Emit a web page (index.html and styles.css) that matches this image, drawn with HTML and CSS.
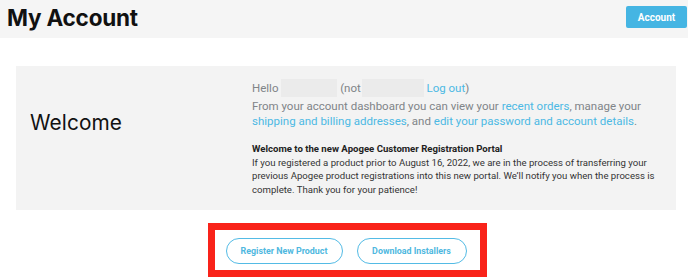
FILE: index.html
```html
<!DOCTYPE html>
<html>
<head>
<meta charset="utf-8">
<link rel="stylesheet" href="styles.css">
</head>
<body>
<header class="topbar">
  <h1 class="page-title">My Account</h1>
  <a class="account-btn" href="#">Account</a>
</header>
<main class="content">
  <section class="card">
    <div class="card-left">
      <h2 class="welcome">Welcome</h2>
    </div>
    <div class="card-right">
      <p class="hello">Hello <span class="blur blur-a"></span> (not <span class="blur blur-b"></span> <a href="#">Log out</a>)</p>
      <p class="intro">From your account dashboard you can view your <a href="#">recent orders</a>, manage your <a href="#">shipping and billing addresses</a>, and <a href="#">edit your password and account details</a>.</p>
      <div class="notice">
        <p class="notice-title">Welcome to the new Apogee Customer Registration Portal</p>
        <p class="notice-body">If you registered a product prior to August 16, 2022, we are in the process of transferring your previous Apogee product registrations into this new portal. We’ll notify you when the process is complete. Thank you for your patience!</p>
      </div>
    </div>
  </section>
  <div class="actions-wrap">
    <div class="actions">
      <a class="pill" href="#">Register New Product</a>
      <a class="pill pill-b" href="#">Download Installers</a>
    </div>
  </div>
</main>
</body>
</html>
```

FILE: styles.css
```css
* { box-sizing: border-box; }
html, body { margin: 0; padding: 0; background: #fff; }
body { font-family: Roboto, "Liberation Sans", sans-serif; }
a { text-decoration: none; }

.topbar {
  height: 38px;
  background: #f5f5f5;
  display: flex;
  align-items: flex-start;
  justify-content: space-between;
  padding: 0 1px 0 7px;
}
.page-title {
  margin: 0;
  font-family: Inter, "Open Sans", sans-serif;
  font-weight: 700;
  font-size: 22.5px;
  line-height: 36px;
  color: #111;
  letter-spacing: -0.2px;
}
.account-btn {
  margin-top: 6px;
  width: 61px;
  height: 22px;
  background: #45b5e3;
  color: #fff;
  font-weight: 700;
  font-size: 10px;
  display: flex;
  align-items: center;
  justify-content: center;
  border-radius: 2px;
}

.content { padding: 28px 12px 0 16px; }
.card {
  background: #f3f3f3;
  height: 144px;
  display: flex;
}
.card-left {
  width: 236px;
  padding: 44px 0 0 14px;
}
.welcome {
  margin: 0;
  font-family: Inter, "Open Sans", sans-serif;
  font-weight: 400;
  font-size: 20.8px;
  line-height: 26px;
  color: #111;
  letter-spacing: 0.1px;
}
.card-right {
  flex: 1;
  padding: 13px 8px 0 0;
  color: #808488;
  font-size: 11.5px;
  line-height: 15px;
}
.card-right p { margin: 0; }
.card-right a { color: #4cb9e4; }
.hello { height: 16px; }
.blur {
  display: inline-block;
  background: #ebebeb;
  height: 18px;
  vertical-align: -5px;
}
.blur-a { width: 56px; }
.blur-b { width: 62px; margin-left: -2px; }
.intro { margin-top: 4px !important; }
.notice { margin-top: 13px; color: #333; font-size: 9.6px; line-height: 13.7px; }
.notice-title { font-weight: 700; color: #222; }

.actions-wrap {
  display: flex;
  justify-content: center;
  padding-top: 13px;
  padding-left: 2px;
}
.actions {
  border: 7px solid #f9231a;
  display: flex;
  gap: 14px;
  padding: 8px 13px 6px 11px;
}
.pill {
  height: 26px;
  width: 117px;
  border: 1.5px solid #53bbe5;
  border-radius: 13px;
  color: #4fb8e0;
  font-weight: 700;
  font-size: 8.9px;
  display: flex;
  align-items: center;
  justify-content: center;
}
.pill-b { width: 110px; }
```
